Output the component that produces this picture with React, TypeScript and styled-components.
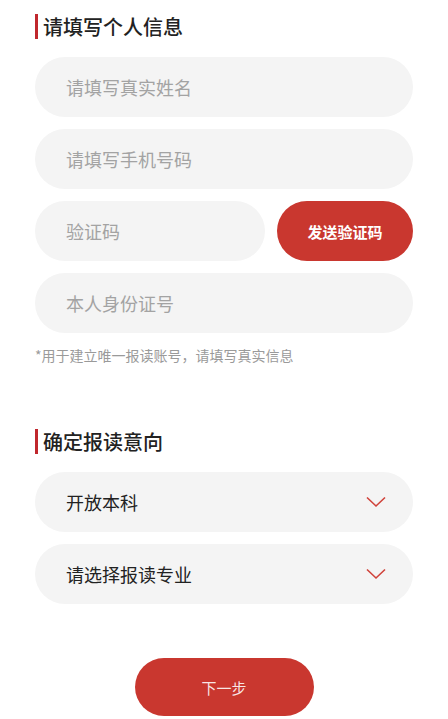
import React, { useState } from 'react';
import styled, { createGlobalStyle } from 'styled-components';

const GlobalStyle = createGlobalStyle`
  html, body {
    margin: 0;
    padding: 0;
    background: #ffffff;
  }
  body {
    font-family: "Noto Sans CJK SC", "Noto Sans", sans-serif;
  }
  * {
    box-sizing: border-box;
  }
`;

const Page = styled.div`
  width: 448px;
  padding: 14px 35px 0;
  display: flex;
  flex-direction: column;
`;

const SectionTitle = styled.h2<{ top?: number }>`
  margin: ${({ top }) => top || 0}px 0 0;
  height: 25px;
  display: flex;
  align-items: center;
  gap: 5px;
  font-size: 20px;
  font-weight: 500;
  color: #222222;
  line-height: 25px;

  &:before {
    content: '';
    width: 3px;
    height: 25px;
    background: #c0272d;
  }
`;

const FieldList = styled.div`
  margin-top: 18px;
  display: flex;
  flex-direction: column;
  gap: 12px;
`;

const FieldRow = styled.div`
  display: flex;
  gap: 12px;
`;

const Field = styled.input`
  flex: 1 1 auto;
  width: 100%;
  min-width: 0;
  height: 60px;
  border: none;
  outline: none;
  border-radius: 30px;
  background: #f4f4f4;
  padding: 0 31px;
  font-family: inherit;
  font-size: 18px;
  color: #222222;

  &::placeholder {
    color: #a3a3a3;
  }
`;

const CodeButton = styled.button`
  flex: 0 0 136px;
  height: 60px;
  border: none;
  border-radius: 30px;
  background: #c9372f;
  color: #ffffff;
  font-family: inherit;
  font-size: 15px;
  font-weight: 700;
  cursor: pointer;
`;

const Note = styled.p`
  margin: 12px 0 0;
  font-size: 14px;
  line-height: 20px;
  color: #9a9a9a;
`;

const Select = styled.div`
  height: 60px;
  border-radius: 30px;
  background: #f4f4f4;
  padding: 0 27px 0 31px;
  display: flex;
  align-items: center;
  justify-content: space-between;
  font-size: 18px;
  color: #222222;
  cursor: pointer;
`;

const NextButton = styled.button`
  align-self: center;
  margin-top: 54px;
  width: 179px;
  height: 58px;
  border: none;
  border-radius: 29px;
  background: #c9372f;
  color: rgba(255, 255, 255, 0.88);
  font-family: inherit;
  font-size: 15px;
  cursor: pointer;
`;

const Chevron = () => (
  <svg width="20" height="12" viewBox="0 0 20 12" fill="none">
    <path d="M1 1.5 L10 10 L19 1.5" stroke="#d0423a" strokeWidth="1.6" />
  </svg>
);

const App: React.FC = () => {
  const [level] = useState('开放本科');

  return (
    <>
      <GlobalStyle />
      <Page>
        <SectionTitle>请填写个人信息</SectionTitle>
        <FieldList>
          <Field placeholder="请填写真实姓名" />
          <Field placeholder="请填写手机号码" />
          <FieldRow>
            <Field placeholder="验证码" />
            <CodeButton>发送验证码</CodeButton>
          </FieldRow>
          <Field placeholder="本人身份证号" />
        </FieldList>
        <Note>*用于建立唯一报读账号，请填写真实信息</Note>

        <SectionTitle top={64}>确定报读意向</SectionTitle>
        <FieldList>
          <Select>
            {level}
            <Chevron />
          </Select>
          <Select>
            请选择报读专业
            <Chevron />
          </Select>
        </FieldList>

        <NextButton>下一步</NextButton>
      </Page>
    </>
  );
};

export default App;
